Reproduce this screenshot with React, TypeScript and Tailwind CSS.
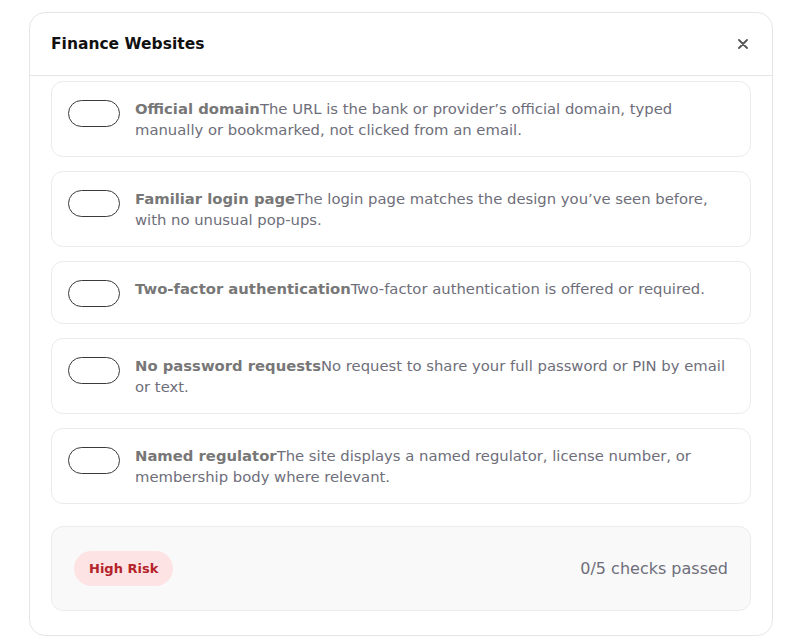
const checks = [
  {
    label: "Official domain",
    text: "The URL is the bank or provider’s official domain, typed manually or bookmarked, not clicked from an email.",
  },
  {
    label: "Familiar login page",
    text: "The login page matches the design you’ve seen before, with no unusual pop-ups.",
  },
  {
    label: "Two-factor authentication",
    text: "Two-factor authentication is offered or required.",
  },
  {
    label: "No password requests",
    text: "No request to share your full password or PIN by email or text.",
  },
  {
    label: "Named regulator",
    text: "The site displays a named regulator, license number, or membership body where relevant.",
  },
];

function Toggle() {
  return (
    <span className="mt-0.5 block h-[27px] w-[52px] shrink-0 rounded-full border border-[#3a3a3a] bg-white" />
  );
}

export default function App() {
  return (
    <div className="min-h-screen bg-white pt-3 font-['DejaVu_Sans',sans-serif]">
      <div className="ml-[29px] mr-[27px] rounded-2xl border border-[#e6e6e6] bg-white">
        {/* Header */}
        <div className="flex h-[63px] items-center justify-between border-b border-[#e6e6e6] px-[21px]">
          <h2 className="mt-0.5 text-[15.5px] font-semibold text-[#111]">Finance Websites</h2>
          <button className="flex h-4 w-4 items-center justify-center text-[#555]">
            <svg width="10" height="10" viewBox="0 0 10 10" fill="none">
              <path d="M1 1l8 8M9 1l-8 8" stroke="currentColor" strokeWidth="1.8" strokeLinecap="round" />
            </svg>
          </button>
        </div>

        {/* Checks */}
        <div className="flex flex-col gap-3.5 px-[21px] pt-[5px]">
          {checks.map((c) => (
            <div
              key={c.label}
              className="flex items-start gap-[15px] rounded-xl border border-[#ebebeb] bg-white p-4"
            >
              <Toggle />
              <p className="text-[14.8px] leading-[21px] text-[#6e6e7a]">
                <span className="font-semibold text-[#777]">{c.label}</span>
                {c.text}
              </p>
            </div>
          ))}
        </div>

        {/* Summary */}
        <div className="px-[21px] pt-[22px] pb-6">
          <div className="flex items-center justify-between rounded-xl border border-[#ececec] bg-[#f9f9f9] px-[22px] py-6">
            <span className="rounded-full bg-[#fde3e3] px-[15px] py-[7px] text-[13px] font-bold leading-[21px] text-[#b4232a]">
              High Risk
            </span>
            <span className="text-[16px] text-[#6e6e7a]">0/5 checks passed</span>
          </div>
        </div>
      </div>
    </div>
  );
}
